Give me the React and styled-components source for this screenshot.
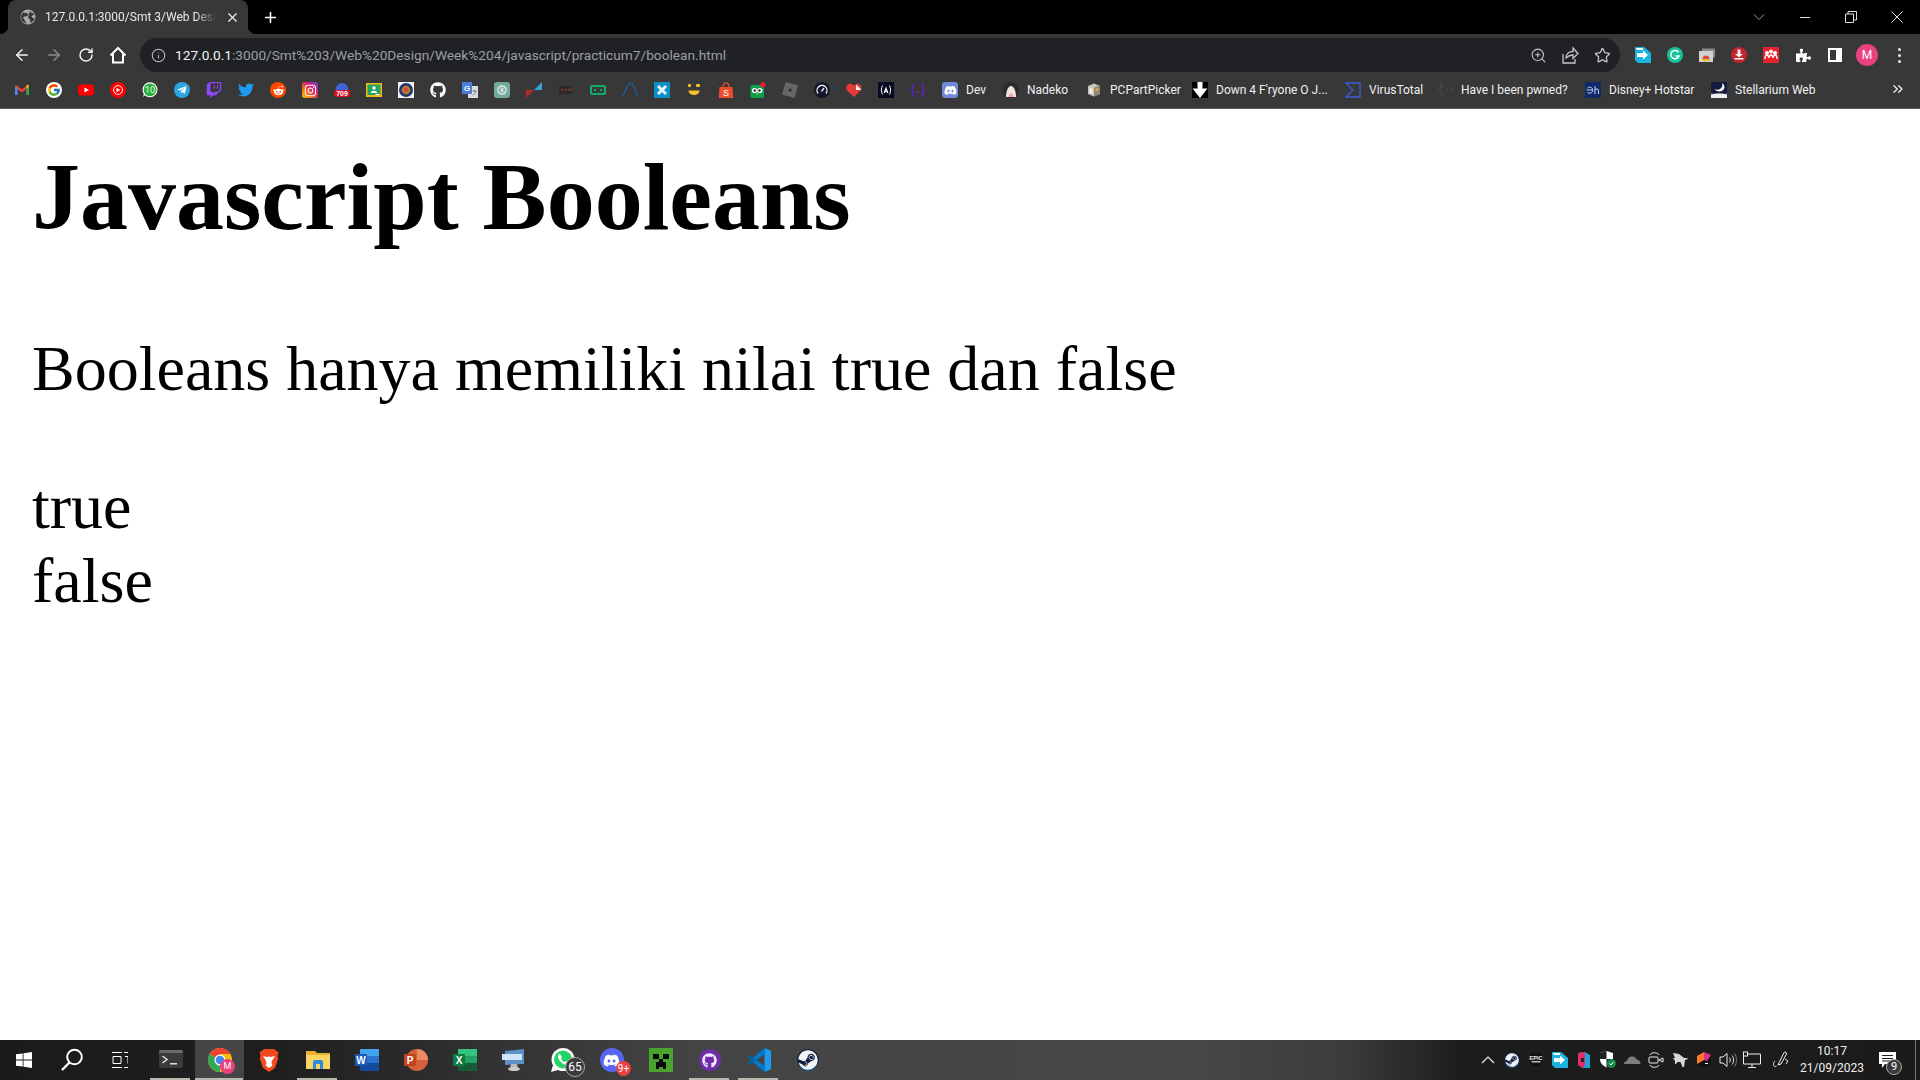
import React from 'react';
import styled, { createGlobalStyle } from 'styled-components';
import { ArrowLeft, ArrowRight, RotateCw, Info, ZoomIn, Star, X, Plus, ChevronsRight } from 'lucide-react';
import { FaTelegramPlane, FaTwitch, FaTwitter, FaRedditAlien, FaInstagram, FaGithub, FaDiscord, FaSteam, FaPuzzlePiece } from 'react-icons/fa';
import { FcGoogle } from 'react-icons/fc';

const GlobalStyle = createGlobalStyle`
  html, body { margin: 0; padding: 0; background: #fff; }
  body { width: 1920px; height: 1080px; overflow: hidden; }
  * { box-sizing: border-box; }
`;

const Shell = styled.div`
  width: 1920px;
  height: 1080px;
  display: flex;
  flex-direction: column;
  font-family: Roboto, "Open Sans", sans-serif;
`;

const TitleBar = styled.div`
  height: 34px;
  flex: none;
  background: #000;
  display: flex;
  align-items: stretch;
  padding-left: 8px;
  color: #fff;
`;

const Tab = styled.div`
  width: 240px;
  background: #383838;
  border-radius: 8px 8px 0 0;
  display: flex;
  align-items: center;
  padding: 0 8px 0 12px;
  gap: 9px;
  position: relative;
  &::before, &::after {
    content: '';
    position: absolute;
    bottom: 0;
    width: 8px;
    height: 8px;
  }
  &::before { left: -8px; background: radial-gradient(circle at 0 0, #000 8px, #383838 8.5px); }
  &::after { right: -8px; background: radial-gradient(circle at 100% 0, #000 8px, #383838 8.5px); }
`;

const TabTitle = styled.span`
  flex: 1;
  font-size: 12px;
  color: #e8e8e8;
  white-space: nowrap;
  overflow: hidden;
  -webkit-mask-image: linear-gradient(90deg, #000 88%, transparent);
  mask-image: linear-gradient(90deg, #000 88%, transparent);
`;

const NewTab = styled.div`
  width: 44px;
  display: flex;
  align-items: center;
  justify-content: center;
`;

const Spacer = styled.div`
  flex: 1;
`;

const WinControls = styled.div`
  display: flex;
  align-items: center;
`;

const WinButton = styled.div`
  width: 46px;
  height: 28px;
  display: flex;
  align-items: center;
  justify-content: center;
`;

const Toolbar = styled.div`
  height: 38px;
  flex: none;
  background: #383838;
  display: flex;
  align-items: flex-end;
  padding-left: 6px;
  color: #e8e8e8;
`;

const NavButton = styled.div`
  width: 32px;
  height: 34px;
  display: flex;
  align-items: center;
  justify-content: center;
  color: ${p => (p.$dim ? '#8a8a8a' : '#f2f2f2')};
`;

const Omnibox = styled.div`
  margin-left: 6px;
  width: 1480px;
  height: 34px;
  background: #202124;
  border-radius: 17px;
  display: flex;
  align-items: center;
  padding: 0 2px 0 11px;
`;

const Url = styled.div`
  flex: 1;
  margin-left: 9px;
  font-size: 13.7px;
  color: #9aa0a6;
  white-space: nowrap;
  b { font-weight: 400; color: #f1f3f4; }
`;

const OmniIcon = styled.div`
  width: 32px;
  display: flex;
  justify-content: center;
  color: #c4c7c5;
`;

const Extensions = styled.div`
  margin-left: 7px;
  display: flex;
  height: 34px;
  align-items: center;
`;

const ExtSlot = styled.div`
  width: 32px;
  display: flex;
  align-items: center;
  justify-content: center;
`;

const Avatar = styled.div`
  width: 22px;
  height: 22px;
  border-radius: 50%;
  background: #e8417e;
  color: #fff;
  font-size: 12px;
  display: flex;
  align-items: center;
  justify-content: center;
`;

const Dots = styled.div`
  display: flex;
  flex-direction: column;
  gap: 3px;
  i { width: 3px; height: 3px; background: #e8e8e8; border-radius: 50%; display: block; }
`;

const BookmarkBar = styled.div`
  height: 37px;
  flex: none;
  background: #383838;
  border-bottom: 1px solid #5e5e5e;
  display: flex;
  align-items: center;
  padding-left: 14px;
  color: #f0f0f0;
  font-size: 12px;
  position: relative;
`;

const BareMark = styled.div`
  width: 32px;
  height: 16px;
  flex: none;
  padding-right: 16px;
  display: flex;
`;

const NamedMark = styled.div`
  display: flex;
  align-items: center;
  margin-right: ${p => p.$mr}px;
  white-space: nowrap;
  span { margin-left: 8px; width: ${p => p.$w}px; }
`;

const MoreMarks = styled.div`
  position: absolute;
  right: 14px;
  top: 9px;
  color: #e8e8e8;
`;

const Page = styled.main`
  flex: 1;
  background: #fff;
  padding: 1px 32px 0;
  color: #000;
  font-family: "Liberation Serif", "Times New Roman", serif;
`;

const Heading = styled.h1`
  margin: 32px 0 0;
  font-size: 96px;
  line-height: 110px;
  font-weight: 700;
`;

const Lead = styled.p`
  margin: 80px 0 0;
  font-size: 64px;
  line-height: 74px;
`;

const Output = styled.div`
  margin-top: 64px;
  font-size: 64px;
  line-height: 74px;
`;

const Taskbar = styled.footer`
  height: 40px;
  flex: none;
  display: flex;
  align-items: stretch;
  background: linear-gradient(90deg, #1b1b1b 0%, #1e1e1e 14%, #444 36%, #474747 62%, #3c3c3c 70%, #1d1d1d 76%, #1b1b1b 100%);
  color: #fff;
`;

const StartSlot = styled.div`
  width: 48px;
  display: flex;
  align-items: center;
  justify-content: center;
`;

const AppList = styled.div`
  display: flex;
  margin-left: 2px;
`;

const AppSlot = styled.div`
  width: 49px;
  position: relative;
  display: flex;
  align-items: center;
  justify-content: center;
  background: ${p => (p.$active ? 'rgba(255,255,255,.18)' : 'transparent')};
  &::after {
    content: ${p => (p.$open ? "''" : 'none')};
    position: absolute;
    bottom: 0;
    left: ${p => (p.$active ? 0 : 4)}px;
    right: ${p => (p.$active ? 1 : 5)}px;
    height: 2px;
    background: #b9b9b0;
  }
`;

const Badge = styled.span`
  position: absolute;
  right: ${p => p.$r}px;
  bottom: ${p => p.$b}px;
  width: ${p => p.$s}px;
  height: ${p => p.$s}px;
  border-radius: 50%;
  font-size: ${p => p.$f}px;
  line-height: ${p => p.$s - (p.$ring ? 2 : 0)}px;
  text-align: center;
  color: #fff;
  background: ${p => p.$bg};
  border: ${p => (p.$ring ? '1px solid #aaa' : 'none')};
`;

const Tray = styled.div`
  display: flex;
  align-items: center;
  margin-left: auto;
`;

const TraySlot = styled.div`
  width: 24px;
  height: 40px;
  display: flex;
  align-items: center;
  justify-content: center;
  color: #eee;
  position: relative;
  margin-left: ${p => p.$ml || 0}px;
`;

const Clock = styled.div`
  width: 72px;
  margin-left: 3px;
  text-align: center;
  font-size: 12px;
  line-height: 17px;
  color: #f0f0f0;
`;

const Notify = styled.div`
  width: 52px;
  height: 40px;
  position: relative;
  display: flex;
  align-items: center;
  padding-left: 11px;
`;

const ShowDesktop = styled.div`
  position: absolute;
  right: 4px;
  top: 0;
  bottom: 0;
  width: 1px;
  background: #777;
`;

/* small svg helper, every favicon is drawn on a 16 box */
const S = ({ size = 16, box = 16, children }) => (
  <svg width={size} height={size} viewBox={`0 0 ${box} ${box}`} style={{ display: 'block', flex: 'none' }}>
    {children}
  </svg>
);

const Tile = styled.div`
  width: ${p => p.$s || 16}px;
  height: ${p => p.$s || 16}px;
  flex: none;
  border-radius: ${p => p.$r || 0}px;
  background: ${p => p.$bg};
  color: ${p => p.$fg || '#fff'};
  display: flex;
  align-items: center;
  justify-content: center;
`;

const Gmail = () => (
  <S>
    <path d="M1 4v9h2.500V7L8 10.500 12.500 7v6H15V4l-1-1.200L8 7.500 2 2.800z" fill="#ea4335" />
    <path d="M1 4.200V13h2.500V6z" fill="#4285f4" />
    <path d="M15 4.200V13h-2.500V6z" fill="#34a853" />
    <path d="M12.500 6.500 15 4.600c0-1.600-1.600-2.300-2.500-1.600z" fill="#fbbc04" />
  </S>
);
const YouTube = () => (
  <S>
    <rect y="2.500" width="16" height="11" rx="3" fill="#f00" />
    <path d="M6.500 5.500v5L11 8z" fill="#fff" />
  </S>
);
const YtMusic = () => (
  <S>
    <circle cx="8" cy="8" r="8" fill="#f00" />
    <circle cx="8" cy="8" r="4.400" fill="none" stroke="#fff" />
    <path d="M6.500 5.800v4.400L10.300 8z" fill="#fff" />
  </S>
);
const Whats = () => (
  <S>
    <circle cx="8" cy="7.800" r="7.500" fill="#fff" />
    <path d="M1 15l1-3.400h3z" fill="#fff" />
    <circle cx="8" cy="7.800" r="6.400" fill="#25b13b" />
    <text x="8" y="11" textAnchor="middle" fontSize="9" fill="#fff" fontFamily="Open Sans">10</text>
  </S>
);
const Classroom = () => (
  <S>
    <rect y="1" width="16" height="14" fill="#f5b913" />
    <rect x="1.500" y="2.500" width="13" height="10.500" fill="#21a464" />
    <circle cx="8" cy="6" r="1.700" fill="#fff" />
    <path d="M4.800 11c0-3 6.400-3 6.400 0z" fill="#fff" />
    <rect x="9.500" y="12" width="4" height="1" fill="#fff" />
  </S>
);
const Num709 = () => (
  <S>
    <path d="M1.500 8a6.500 7 0 0 1 13 0z" fill="#3f63d8" />
    <rect y="8" width="16" height="7" rx="2.500" fill="#d3121d" />
    <text x="8" y="14" textAnchor="middle" fontSize="7" fontWeight="700" fill="#fff" fontFamily="Liberation Sans">709</text>
  </S>
);
const Emblem = () => (
  <S>
    <rect width="16" height="16" fill="#f4f4f4" />
    <circle cx="8" cy="8" r="7" fill="#1d3570" />
    <circle cx="8" cy="8" r="4.400" fill="#b5763a" />
    <circle cx="8" cy="8" r="2" fill="#d9432f" />
  </S>
);
const Translate = () => (
  <S>
    <rect x="6" y="4" width="10" height="12" fill="#d9dde2" />
    <rect width="10" height="12" rx="1" fill="#4a7fe0" />
    <text x="5" y="9" textAnchor="middle" fontSize="8" fontWeight="700" fill="#fff" fontFamily="Liberation Sans">G</text>
    <path d="M10.500 9h4M12.500 8v1M14 9c-.5 2-2 3.500-3.200 4" stroke="#777" fill="none" />
  </S>
);
const Gpt = () => (
  <S>
    <rect width="16" height="16" rx="3" fill="#74aa9c" />
    <circle cx="8" cy="8" r="4.200" fill="none" stroke="#dcebe6" strokeWidth="1.300" />
    <path d="M5 5.500 11 10.500M11 5.500 5 10.500M8 3.600v8.800" stroke="#dcebe6" />
  </S>
);
const Flag = () => (
  <S>
    <path d="M16 0v8H8z" fill="#39a3dd" />
    <path d="M0 16V8h8z" fill="#b4262c" />
  </S>
);
const DarkMarks = () => (
  <S>
    <rect x="1" y="4" width="13" height="8" rx="1" fill="#2a2a2a" />
    <path d="M3 7l1.500 1.500L6 7M7 8.500 9 7M10 7l1.500 1.500L13 6" stroke="#c9383a" fill="none" strokeWidth="0.900" />
  </S>
);
const Pill = () => (
  <S>
    <rect y="3" width="16" height="10" rx="2" fill="#0fa968" />
    <rect x="2" y="5" width="12" height="6" rx="1" fill="#383838" />
    <rect x="4" y="7" width="2" height="2" fill="#0fa968" />
    <rect x="10" y="7" width="2" height="2" fill="#0fa968" />
  </S>
);
const Wave = () => (
  <S>
    <path d="M0 15C3 12 5 1 8.500 1S13 10 16 15" fill="none" stroke="#1a5e9e" strokeWidth="1.300" />
  </S>
);
const BlueX = () => (
  <Tile $bg="#0a8fc7">
    <S size={12} box={12}><path d="M2 2l8 8M10 2l-8 8" stroke="#e8f4fa" strokeWidth="3" /></S>
  </Tile>
);
const Smile = () => (
  <S>
    <rect x="2" y="2" width="3" height="3" rx="1" fill="#f5c02c" />
    <rect x="10" y="2" width="4" height="3" rx="1" fill="#f5c02c" />
    <path d="M2.500 8.500h11c0 6-11 6-11 0z" fill="#f5c02c" />
  </S>
);
const Shopee = () => (
  <S>
    <path d="M1.500 5h13l.7 11H.8z" fill="#ee4d2d" />
    <path d="M5 5c0-5.500 6-5.500 6 0" fill="none" stroke="#ee4d2d" strokeWidth="1.200" />
    <text x="8" y="14" textAnchor="middle" fontSize="9" fill="#fff" fontFamily="Liberation Sans">S</text>
  </S>
);
const Owl = () => (
  <S>
    <rect x="0.500" y="3" width="13.500" height="13" rx="1.500" fill="#0ba14b" />
    <circle cx="4.500" cy="8.500" r="2.600" fill="#fff" />
    <circle cx="9.800" cy="8.500" r="2.600" fill="#fff" />
    <circle cx="4.800" cy="8.500" r="1.200" fill="#222" />
    <circle cx="9.500" cy="8.500" r="1.200" fill="#222" />
    <path d="M6 11h2.400L7.200 13z" fill="#f7a823" />
    <circle cx="13" cy="2.800" r="2.600" fill="#f0142c" />
  </S>
);
const Roblox = () => (
  <S>
    <path d="M3.500 0 16 3.200 12.600 16 0 12.600z" fill="#666" />
    <rect x="6.700" y="6.700" width="2.800" height="2.800" fill="#2f2f2f" />
  </S>
);
const Gauge = () => (
  <S>
    <circle cx="8" cy="8" r="8" fill="#15182c" />
    <path d="M4 11.500a5 5 0 1 1 8 0" fill="none" stroke="#f2f2f2" strokeWidth="1.300" />
    <path d="M7.500 9.500 10 6" stroke="#f2f2f2" strokeWidth="1.300" />
  </S>
);
const Heart = () => (
  <S>
    <path d="M8 15 1 8.500C-1.500 5 2 .5 5.500 2L8 3.500l2-1.500c3.500-1.500 6.500 2 5 6z" fill="#e53935" />
    <path d="M10 2.500 15.500 8H10z" fill="#f3f3f3" />
  </S>
);
const FreeCode = () => (
  <Tile $bg="#0a0a23" $fg="#f5f6f7">
    <S size={16}>
      <path d="M4.500 3.500C3 6 3 10 4.500 12.500M11.500 3.500c1.500 2.500 1.500 6.500 0 9" fill="none" stroke="#f5f6f7" />
      <path d="M8 4.500 10.500 11H9L8 9l-1 2H5.500z" fill="#f5f6f7" />
    </S>
  </Tile>
);
const Braces = () => (
  <S>
    <path d="M5 1.500C2.500 1.500 3.500 7 1.500 8c2 1 1 6.500 3.500 6.500M11 1.500c2.500 0 1.500 5.500 3.500 6.500-2 1-1 6.500-3.500 6.500" fill="none" stroke="#6a1ce2" strokeWidth="1.200" />
    <path d="M6 9.500c1 1 3 1 4 0" stroke="#6a1ce2" fill="none" />
  </S>
);
const Nadeko = () => (
  <S>
    <circle cx="8" cy="8" r="8" fill="#2b2b2b" />
    <path d="M3 15c0-6 2-11 5-11s5 5 5 11z" fill="#f1e4e0" />
    <path d="M5.500 15c0-2 1-3.500 2.500-3.500s2.500 1.500 2.500 3.500z" fill="#e8a7a7" />
  </S>
);
const Cube = () => (
  <S>
    <path d="M8 1.500 14 4v8l-6 2.500L2 12V4z" fill="#c9c5bc" />
    <path d="M8 5.500 14 3.500V12l-6 2.500z" fill="#8b8578" />
    <path d="M9.500 6.500 12.500 5.500v3L9.500 9.500z" fill="#e0a92c" />
    <path d="M3.500 5.500 6.500 6.500v6l-3-1.500z" fill="#efede6" />
  </S>
);
const DownArrow = () => (
  <S>
    <rect width="16" height="16" fill="#000" />
    <path d="M5.500 0h5v6.500h5L8 16 .5 6.500h5z" fill="#fff" />
  </S>
);
const Virus = () => (
  <S>
    <path d="M1 1h14v14H1l7-7z" fill="none" stroke="#3a5be0" strokeWidth="1.300" />
  </S>
);
const Pwned = () => (
  <S>
    <path d="M5 1v4M5 10v5M1 7.500l3 1M9 8h2M13 8h3M3 3l2 3" stroke="#505050" fill="none" />
  </S>
);
const Hotstar = () => (
  <Tile $bg="#0f2a6b" $fg="#c9d6f5">
    <S size={16}>
      <path d="M2.500 6c3-2 6 0 5 3.500-.8 2-3.500 2.200-5 1M1.500 8h6" fill="none" stroke="#c9d6f5" />
      <path d="M10 4v8M10 8c1-1.500 3.500-1.500 3.500 .5V12" fill="none" stroke="#c9d6f5" />
    </S>
  </Tile>
);
const Stellarium = () => (
  <S>
    <rect width="16" height="11" fill="#131a3e" />
    <rect y="11" width="16" height="5" fill="#f1f1f1" />
    <path d="M11 1c1.500 5-3 8-7.500 6 2.500 4 9.500 3 10-1.500C13.700 3.500 12.500 2 11 1z" fill="#f5f5f5" />
    <path d="M0 12c6-1.500 11-1.500 16 0" stroke="#131a3e" fill="none" />
  </S>
);

const bareMarks = [
  <Gmail />,
  <Tile $bg="#fff" $r={8}><FcGoogle size={14} /></Tile>,
  <YouTube />,
  <YtMusic />,
  <Whats />,
  <Tile $bg="#2ca5e0" $r={8}><FaTelegramPlane size={10} /></Tile>,
  <FaTwitch size={16} color="#9146ff" />,
  <FaTwitter size={16} color="#1d9bf0" />,
  <Tile $bg="#ff4500" $r={8}><FaRedditAlien size={11} /></Tile>,
  <Tile $bg="linear-gradient(45deg,#fdc70c,#f3661e 35%,#d6177c 65%,#7a3ee0)" $r={3}><FaInstagram size={13} /></Tile>,
  <Num709 />,
  <Classroom />,
  <Emblem />,
  <FaGithub size={16} color="#fff" />,
  <Translate />,
  <Gpt />,
  <Flag />,
  <DarkMarks />,
  <Pill />,
  <Wave />,
  <BlueX />,
  <Smile />,
  <Shopee />,
  <Owl />,
  <Roblox />,
  <Gauge />,
  <Heart />,
  <FreeCode />,
  <Braces />,
];

/* widths are the label boxes read off the reference */
const namedMarks = [
  { icon: <Tile $bg="#7289da" $r={3}><FaDiscord size={13} /></Tile>, label: 'Dev', w: 21, mr: 16 },
  { icon: <Nadeko />, label: 'Nadeko', w: 42, mr: 17 },
  { icon: <Cube />, label: 'PCPartPicker', w: 65, mr: 17 },
  { icon: <DownArrow />, label: "Down 4 F'ryone O J...", w: 112, mr: 17 },
  { icon: <Virus />, label: 'VirusTotal', w: 52, mr: 16 },
  { icon: <Pwned />, label: 'Have I been pwned?', w: 108, mr: 16 },
  { icon: <Hotstar />, label: 'Disney+ Hotstar', w: 86, mr: 16 },
  { icon: <Stellarium />, label: 'Stellarium Web', w: 80, mr: 0 },
];

const Globe = () => (
  <S>
    <circle cx="8" cy="8" r="7.500" fill="#a9abae" />
    <path d="M3 3.500c2 .5 4 0 5 1.500s-2 3-3.500 2.500S3 9 4.500 11 6 14 7 15L2 12 .8 7zM10 1.500c0 1.500 1 2 2 2.500l2.500 .5-3 3c1 2 2.500 2 3.500 1.500-1 2.500-3 4.500-4.500 5 0-2-.5-4-2.500-5.500" fill="#383838" />
  </S>
);
const HomeIcon = () => (
  <S size={18} box={18}>
    <path d="M1.500 9.500 9 2l7.500 7.500M4 8v8.500h10V8" fill="none" stroke="#fff" strokeWidth="2" />
  </S>
);
const ShareArrow = () => (
  <S size={18} box={18}>
    <path d="M2 8v9h12v-4M5 12c0-4 3-6.500 7-6.500V2l5 5.500-5 5V9c-3 0-5 1-7 3z" fill="none" stroke="#c4c7c5" strokeWidth="1.300" />
  </S>
);
const WinChevron = () => (
  <S size={12} box={12}><path d="M1 3.500 6 8.500l5-5" fill="none" stroke="#9a9a9a" /></S>
);
const WinMin = () => (
  <S size={12} box={12}><path d="M1 6.500h10" stroke="#e0e0e0" /></S>
);
const Restore = () => (
  <S size={12} box={12}>
    <path d="M.5 3h8v8.500h-8zM3 3V.5h8.500V9H9" fill="none" stroke="#e0e0e0" />
  </S>
);
const WinClose = () => (
  <S size={12} box={12}><path d="M.5.5l11 11M11.500.5l-11 11" stroke="#e0e0e0" /></S>
);
const Push = ({ size = 16 }) => (
  <S size={size}>
    <path d="M0 0h9l7 6v10H3l-3-3z" fill="#19b5e0" />
    <path d="M1 1h7v2H2z" fill="#fff" />
    <path d="M2 6h6V3.500l5 4.500-5 4.500V10H2z" fill="#fff" />
  </S>
);
const Grammarly = () => (
  <Tile $bg="#15c39a" $r={8}>
    <S size={12} box={12}><path d="M9.500 3.200A4.200 4.200 0 1 0 10 7H6.500" fill="none" stroke="#fff" strokeWidth="1.500" /></S>
  </Tile>
);
const Screens = () => (
  <S>
    <rect x="3" y="1.500" width="13" height="9" fill="#8a8a8a" />
    <rect y="4" width="14" height="11" fill="#d2d2d2" />
    <path d="M3.500 12a3.500 3.500 0 0 1 7 0z" fill="#ea4335" />
    <path d="M7 12a2 2 0 0 1 3.500 0z" fill="#4285f4" />
    <rect x="3.500" y="12" width="7" height="2" fill="#fbbc04" />
  </S>
);
const Downloader = () => (
  <S>
    <circle cx="8" cy="8" r="8" fill="#c5232d" />
    <path d="M6.500 2.500h3V7H12L8 10.500 4 7h2.500z" fill="#f4f4f4" />
    <rect x="3.500" y="11" width="9" height="1.500" fill="#f4f4f4" />
  </S>
);
const Mendeley = () => (
  <Tile $bg="#e5242f">
    <S size={14} box={14}>
      <circle cx="3" cy="5" r="2" fill="#fff" /><circle cx="7" cy="3.500" r="2" fill="#fff" /><circle cx="11" cy="5" r="2" fill="#fff" />
      <path d="M1 11c0-3 1-4 2-4s2 2 2 3c0-1 1-3 2-3s2 2 2 3c0-1 1-3 2-3s2 1 2 4" fill="none" stroke="#fff" strokeWidth="1.300" />
    </S>
  </Tile>
);
const SidePanel = () => (
  <S size={14} box={14}>
    <rect x="1" y="1" width="12" height="12" fill="none" stroke="#fff" strokeWidth="2" />
    <rect x="8" y="1" width="5" height="12" fill="#fff" />
  </S>
);

const WinLogo = () => (
  <S>
    <path d="M0 2.300 6.700 1.400v6.200H0zM7.500 1.300 16 0v7.600H7.500zM0 8.400h6.700v6.200L0 13.700zM7.500 8.400H16V16l-8.500-1.200z" fill="#fff" />
  </S>
);
const SearchIcon = () => (
  <S size={24} box={24}>
    <circle cx="14.500" cy="9" r="7.300" fill="none" stroke="#fff" strokeWidth="2" />
    <path d="M9.500 14.500 2 22" stroke="#fff" strokeWidth="2.400" />
  </S>
);
const TaskView = () => (
  <S>
    <path d="M0 .5h10M0 15.500h10M1 4.500h8v7H1zM12 .5h4M12 15.500h4M13 4.500h3v7" fill="none" stroke="#fff" />
  </S>
);
const TermIcon = () => (
  <S size={24} box={24}>
    <rect y="2" width="24" height="18" rx="1.500" fill="#3b3b3b" />
    <rect y="2" width="24" height="3" rx="1.500" fill="#6a6a6a" />
    <path d="M3.500 8l4.500 3.500-4.500 3.500" fill="none" stroke="#e0e0e0" strokeWidth="1.500" />
    <rect x="11" y="15" width="7" height="1.500" fill="#e0e0e0" />
  </S>
);
const ChromeIcon = () => (
  <S size={24} box={24}>
    <circle cx="12" cy="12" r="12" fill="#fbbc04" />
    <path d="M12 12 1.600 6A12 12 0 0 1 22.400 6H12z" fill="#ea4335" />
    <path d="M12 12 1.600 6A12 12 0 0 0 12 24z" fill="#34a853" />
    <circle cx="12" cy="12" r="5.500" fill="#fff" />
    <circle cx="12" cy="12" r="4.300" fill="#4285f4" />
  </S>
);
const SmallAvatar = styled.span`
  position: absolute;
  right: 9px;
  bottom: 6px;
  width: 15px;
  height: 15px;
  border-radius: 50%;
  background: #e8417e;
  font-size: 9px;
  line-height: 15px;
  text-align: center;
  color: #fff;
`;
const BraveIcon = () => (
  <S size={24} box={24}>
    <path d="M7 1h10l2.500 2 2 1-1 4 .8 2.500L18 20l-6 4-6-4-3.300-9.500L3.500 8l-1-4 2-1z" fill="#f1481e" />
    <path d="M6 8l4 1 2-.6 2 .6 4-1-2.500 4-1 3 1 2.500L12 20l-3.500-2.500 1-2.500-1-3z" fill="#fff" />
  </S>
);
const ExplorerIcon = () => (
  <S size={24} box={24}>
    <path d="M0 3h9l2 2h13v16H0z" fill="#e9b12d" />
    <path d="M0 7h24v14H0z" fill="#fbd466" />
    <path d="M7 21v-7a2 2 0 0 1 2-2h6a2 2 0 0 1 2 2v7h-3v-5h-4v5z" fill="#2e8bd6" />
  </S>
);
const OfficeIcon = ({ letter, tag, dark, mid, light }) => (
  <S size={24} box={24}>
    <rect x="5" y="1" width="19" height="22" rx="1" fill={mid} />
    <rect x="5" y="1" width="19" height="7" fill={light} />
    <rect x="5" y="15" width="19" height="8" fill={dark} />
    <rect y="6" width="12" height="12" rx="1" fill={tag} />
    <text x="6" y="15.500" textAnchor="middle" fontSize="10" fontWeight="700" fill="#fff" fontFamily="Liberation Sans">{letter}</text>
  </S>
);
const PptIcon = () => (
  <S size={24} box={24}>
    <circle cx="13" cy="12" r="11" fill="#d5603c" />
    <path d="M13 1a11 11 0 0 1 11 11H13z" fill="#ed8b63" />
    <rect y="6" width="12" height="12" rx="1" fill="#c4411e" />
    <text x="6" y="15.500" textAnchor="middle" fontSize="10" fontWeight="700" fill="#fff" fontFamily="Liberation Sans">P</text>
  </S>
);
const RemoteIcon = () => (
  <S size={24} box={24}>
    <path d="M3 3 22 1v15l-19 1z" fill="#5f8fc8" />
    <rect x="0" y="6" width="20" height="6" fill="#cfe4f8" />
    <path d="M9 16h6l1 4H8z" fill="#b9b9b9" />
    <ellipse cx="12" cy="21" rx="6" ry="2" fill="#c9c9c9" />
  </S>
);
const WaIcon = () => (
  <S size={24} box={24}>
    <circle cx="12" cy="11.500" r="11.500" fill="#fff" />
    <path d="M0 24l2-7 5 5z" fill="#fff" />
    <circle cx="12" cy="11.500" r="9" fill="#25d366" />
    <path d="M8 6c-2 2-1 5 2 8s6 3.500 7.500 1.500l-2.500-2.500-1.500 1c-1.500-.5-3-2-3.500-3.500l1-1.500L9 6z" fill="#fff" />
  </S>
);
const Creeper = () => (
  <S size={24} box={24}>
    <rect width="24" height="24" fill="#4aa22f" />
    <path d="M4 6h6v5H4zM14 6h6v5h-6zM10 11h4v3h3v7h-3v-2h-4v2H7v-7h3z" fill="#0b0b0b" />
  </S>
);
const GhDesktop = () => (
  <Tile $bg="#6f2da8" $r={12} $s={22}><FaGithub size={15} color="#f3eaff" /></Tile>
);
const VsCode = () => (
  <S size={24} box={24}>
    <path d="M17.500 0 24 3v18l-6.500 3z" fill="#1f9cf0" />
    <path d="M17.500 0v6L9 12l8.500 6v6L6 14 1.800 17 0 16l4-4-4-4 1.800-1L6 10z" fill="#0065a9" />
    <path d="M17.500 0 6 10l3 2 8.500-6zM17.500 24 6 14l3-2 8.500 6z" fill="#007acc" />
  </S>
);
const SteamIcon = ({ size }) => (
  <Tile $bg="radial-gradient(circle at 50% 20%,#14254f,#0f1a3c 55%,#1676b0)" $r={size} $s={size}><FaSteam size={size - 2} color="#f2f2f2" /></Tile>
);

const Epic = () => (
  <S>
    <path d="M1 0h14v13l-7 3-7-3z" fill="#111" stroke="#333" strokeWidth="0.500" />
    <text x="8" y="7.500" textAnchor="middle" fontSize="5.500" fontWeight="700" fill="#eee" fontFamily="Liberation Sans">EPIC</text>
    <rect x="3.500" y="9" width="9" height="1.500" fill="#bbb" />
  </S>
);
const PinkBox = () => (
  <S>
    <path d="M2 1l7-1 5 3v13l-7 0-5-3z" fill="#1ba6d8" />
    <path d="M2 1l7-1v13l-2 3-5-3z" fill="#e72a6f" />
    <rect x="5" y="6" width="3" height="4" fill="#222" />
  </S>
);
const Defender = () => (
  <S size={18} box={18}>
    <path d="M7.500 0l6.500 2v6c0 4-3 7-6.500 8.500C4 15 1 12 1 8V2z" fill="#fff" />
    <path d="M7.500 0v8H1V2zM7.500 8H14c0 4-3 7-6.500 8.500z" fill="#222" />
    <circle cx="12.500" cy="12.500" r="4.500" fill="#148a47" />
    <path d="M10.500 12.500l1.500 1.500 2.500-3" stroke="#fff" fill="none" />
  </S>
);
const Cloud = () => (
  <S size={18} box={18}>
    <path d="M1 13c0-2 1.500-3 3-3 .5-3 3-5 6-4.500 2 .4 3 1.500 3.500 3 2 0 4 2 4 4.500z" fill="#7d7d7d" />
  </S>
);
const Meet = () => (
  <S>
    <path d="M2 3c1-3 8-3 9 0M2 13c1 3 8 3 9 0" fill="none" stroke="#eee" />
    <rect x="1" y="5" width="9" height="6" rx="1" fill="none" stroke="#eee" />
    <path d="M11 8l4-2v4z" fill="none" stroke="#eee" />
  </S>
);
const Plane = () => (
  <S>
    <path d="M1 1l6 1 5 4 3 0 1 1-3 1-1 7-1.500 0-2-5-3 0-1.500 2-1 0 0-3-2-3 2 0z" fill="#d8d8d8" />
  </S>
);
const JetBrains = () => (
  <S>
    <path d="M8 0l7 3v9l-7 4-7-4V4z" fill="#111" />
    <path d="M1 4l7-4v8l-7 4z" fill="#ff7a2e" />
    <path d="M8 0l7 3-4 6-3-1z" fill="#e22a8f" />
    <rect x="9" y="11" width="3" height="1" fill="#fff" />
  </S>
);
const Speaker = () => (
  <S size={18} box={18}>
    <path d="M1 6h3l4-3.500v13L4 12H1z" fill="none" stroke="#eee" />
    <path d="M10.500 6.500c1 1.500 1 3.500 0 5M13 4.500c2 2.500 2 6.500 0 9" fill="none" stroke="#eee" />
    <path d="M15.500 2.500c2.600 3.500 2.600 9.500 0 13" fill="none" stroke="#777" />
  </S>
);
const Network = () => (
  <S size={18} box={18}>
    <rect x="0.500" y="1" width="4" height="4" fill="none" stroke="#eee" />
    <path d="M4.500 3h13v10H.500V5M9 13v3M5 16.500h8" fill="none" stroke="#eee" />
  </S>
);
const Pen = () => (
  <S size={18} box={18}>
    <path d="M3 10c-3 3-1 7 1.500 5M6 14 12 1.500c1.500-1 3 0 2.500 1.500L9 13zM13 8l3 2-2 3" fill="none" stroke="#eee" />
  </S>
);
const Message = () => (
  <S size={18} box={18}>
    <path d="M0 1h17v12H6l-3 4v-4H0z" fill="#fff" />
    <path d="M3 4.500h11M3 7.500h11M3 10h8" stroke="#222" />
  </S>
);
const TrayUp = () => (
  <S size={14} box={14}><path d="M1 10l6-6 6 6" fill="none" stroke="#eee" strokeWidth="1.200" /></S>
);

const apps = [
  { icon: <TermIcon />, open: true },
  { icon: <ChromeIcon />, open: true, active: true, extra: <SmallAvatar>M</SmallAvatar> },
  { icon: <BraveIcon /> },
  { icon: <ExplorerIcon />, open: true },
  { icon: <OfficeIcon letter="W" tag="#1c5bb5" dark="#124a9c" mid="#2a75cf" light="#41a5ee" /> },
  { icon: <PptIcon /> },
  { icon: <OfficeIcon letter="X" tag="#107c41" dark="#185c37" mid="#21a366" light="#33c481" /> },
  { icon: <RemoteIcon /> },
  { icon: <WaIcon />, extra: <Badge $r={2} $b={3} $s={20} $f={12} $bg="#3a3a3a" $ring>65</Badge> },
  { icon: <Tile $bg="#5865f2" $r={12} $s={24}><FaDiscord size={17} /></Tile>, extra: <Badge $r={5} $b={4} $s={15} $f={10} $bg="#ed4245">9+</Badge> },
  { icon: <Creeper /> },
  { icon: <GhDesktop />, open: true },
  { icon: <VsCode />, open: true },
  { icon: <SteamIcon size={22} /> },
];

const tray = [
  <TrayUp />,
  <SteamIcon size={16} />,
  <Epic />,
  <Push />,
  <PinkBox />,
  <Defender />,
  <Cloud />,
  <Meet />,
  <Plane />,
  <JetBrains />,
  <Speaker />,
  <Network />,
];

export default function App() {
  return (
    <Shell>
      <GlobalStyle />
      <TitleBar>
        <Tab>
          <Globe />
          <TabTitle>127.0.0.1:3000/Smt 3/Web Design</TabTitle>
          <X size={15} strokeWidth={2} color="#e8e8e8" />
        </Tab>
        <NewTab><Plus size={17} strokeWidth={2.200} /></NewTab>
        <Spacer />
        <WinControls>
          <WinButton><WinChevron /></WinButton>
          <WinButton><WinMin /></WinButton>
          <WinButton><Restore /></WinButton>
          <WinButton><WinClose /></WinButton>
        </WinControls>
      </TitleBar>
      <Toolbar>
        <NavButton><ArrowLeft size={18} strokeWidth={2} /></NavButton>
        <NavButton $dim><ArrowRight size={18} strokeWidth={2} /></NavButton>
        <NavButton><RotateCw size={16} strokeWidth={2.200} /></NavButton>
        <NavButton><HomeIcon /></NavButton>
        <Omnibox>
          <Info size={15} color="#b8bbbf" strokeWidth={1.700} />
          <Url><b>127.0.0.1</b>:3000/Smt%203/Web%20Design/Week%204/javascript/practicum7/boolean.html</Url>
          <OmniIcon><ZoomIn size={17} strokeWidth={1.500} /></OmniIcon>
          <OmniIcon><ShareArrow /></OmniIcon>
          <OmniIcon><Star size={17} strokeWidth={1.800} /></OmniIcon>
        </Omnibox>
        <Extensions>
          <ExtSlot><Push /></ExtSlot>
          <ExtSlot><Grammarly /></ExtSlot>
          <ExtSlot><Screens /></ExtSlot>
          <ExtSlot><Downloader /></ExtSlot>
          <ExtSlot><Mendeley /></ExtSlot>
          <ExtSlot><FaPuzzlePiece size={15} color="#fff" /></ExtSlot>
          <ExtSlot><SidePanel /></ExtSlot>
          <ExtSlot><Avatar>M</Avatar></ExtSlot>
          <ExtSlot><Dots><i /><i /><i /></Dots></ExtSlot>
        </Extensions>
      </Toolbar>
      <BookmarkBar>
        {bareMarks.map((icon, i) => <BareMark key={i}>{icon}</BareMark>)}
        {namedMarks.map(m => (
          <NamedMark key={m.label} $mr={m.mr} $w={m.w}>
            {m.icon}
            <span>{m.label}</span>
          </NamedMark>
        ))}
        <MoreMarks><ChevronsRight size={16} /></MoreMarks>
      </BookmarkBar>
      <Page>
        <Heading>Javascript Booleans</Heading>
        <Lead>Booleans hanya memiliki nilai true dan false</Lead>
        <Output>
          <div>true</div>
          <div>false</div>
        </Output>
      </Page>
      <Taskbar>
        <StartSlot><WinLogo /></StartSlot>
        <StartSlot><SearchIcon /></StartSlot>
        <StartSlot><TaskView /></StartSlot>
        <AppList>
          {apps.map((a, i) => (
            <AppSlot key={i} $open={a.open} $active={a.active}>
              {a.icon}
              {a.extra}
            </AppSlot>
          ))}
        </AppList>
        <Tray>
          {tray.map((icon, i) => <TraySlot key={i}>{icon}</TraySlot>)}
          <TraySlot $ml={5}><Pen /></TraySlot>
          <Clock>10:17<br />21/09/2023</Clock>
          <Notify>
            <Message />
            <Badge $r={18} $b={5} $s={16} $f={11} $bg="#3a3a3a" $ring>9</Badge>
            <ShowDesktop />
          </Notify>
        </Tray>
      </Taskbar>
    </Shell>
  );
}
